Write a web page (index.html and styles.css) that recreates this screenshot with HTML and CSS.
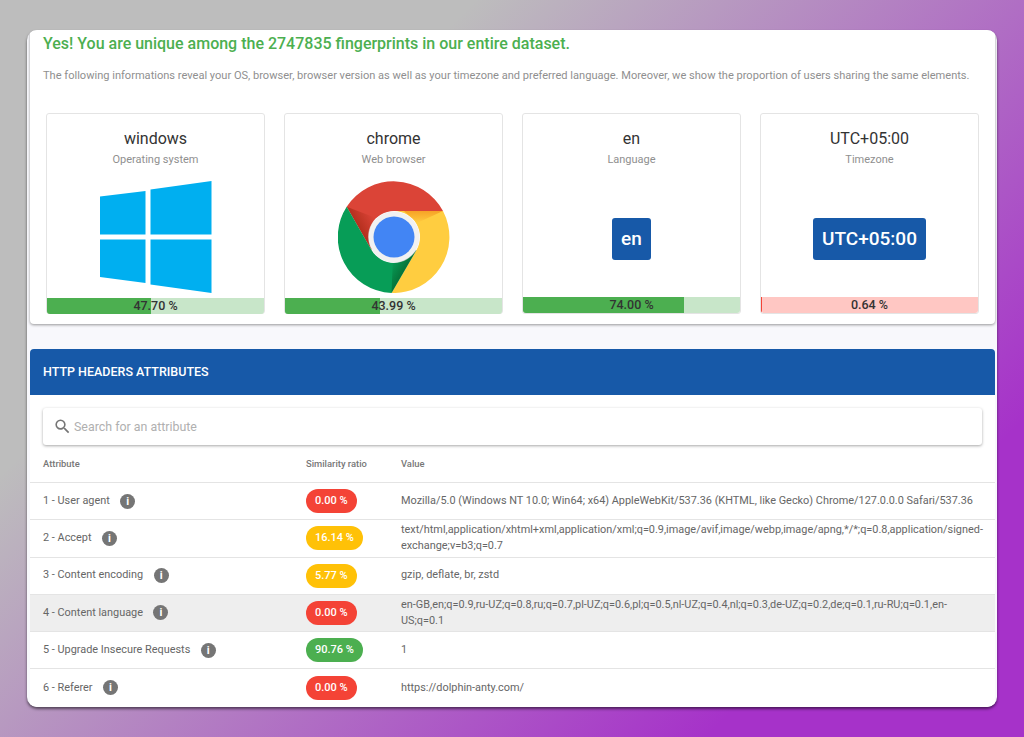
FILE: index.html
```html
<!DOCTYPE html>
<html lang="en">
<head>
   <meta charset="UTF-8">
   <meta name="viewport" content="width=device-width, initial-scale=1.0">
   <title>Fingerprint result</title>
   <link rel="stylesheet" href="styles.css">
</head>
<body>

<div class="window">
   <!-- Summary -->
   <section class="summary">
       <h1>Yes! You are unique among the 2747835 fingerprints in our entire dataset.</h1>
       <p class="intro">The following informations reveal your OS, browser, browser version as well as your timezone and preferred language. Moreover, we show the proportion of users sharing the same elements.</p>
       <div class="cards">
           <div class="card">
               <h2>windows</h2>
               <p class="card-sub">Operating system</p>
               <div class="card-pic">
                   <svg width="112" height="112" viewBox="0 0 112 112">
                       <polygon fill="#00aff0" points="0,15.5 45.5,10 45.5,53.5 0,53.5"/>
                       <polygon fill="#00aff0" points="50.5,8.5 111.5,0 111.5,53.5 50.5,53.5"/>
                       <polygon fill="#00aff0" points="0,58.5 45.5,58.5 45.5,102 0,96"/>
                       <polygon fill="#00aff0" points="50.5,58.5 111.5,58.5 111.5,112 50.5,103.5"/>
                   </svg>
               </div>
               <div class="bar bar-green bar-low">
                   <div class="bar-fill" style="width: 47.7%"></div>
                   <span>47.70 %</span>
               </div>
           </div>
           <div class="card">
               <h2>chrome</h2>
               <p class="card-sub">Web browser</p>
               <div class="card-pic">
                   <svg width="112" height="112" viewBox="0 0 112 112">
                       <defs>
                           <linearGradient id="shadeRed" gradientUnits="userSpaceOnUse" x1="24" y1="52" x2="40" y2="43">
                               <stop offset="0" stop-color="#a52714" stop-opacity="0.7"/>
                               <stop offset="1" stop-color="#a52714" stop-opacity="0"/>
                           </linearGradient>
                           <linearGradient id="shadeGreen" gradientUnits="userSpaceOnUse" x1="68" y1="88" x2="54" y2="80">
                               <stop offset="0" stop-color="#055524" stop-opacity="0.6"/>
                               <stop offset="1" stop-color="#055524" stop-opacity="0"/>
                           </linearGradient>
                           <linearGradient id="shadeYellow" gradientUnits="userSpaceOnUse" x1="80" y1="30" x2="80" y2="42">
                               <stop offset="0" stop-color="#ea6100" stop-opacity="0.4"/>
                               <stop offset="1" stop-color="#ea6100" stop-opacity="0"/>
                           </linearGradient>
                       </defs>
                       <path fill="#db4437" d="M8.7 25.7L33.5 69A26 26 0 0 1 56 30L105 30A56 56 0 0 0 8.7 25.7Z"/>
                       <path fill="url(#shadeRed)" d="M8.7 25.7L33.5 69L46 40Z"/>
                       <path fill="#ffcd40" d="M56 30L105 30A56 56 0 0 1 53.5 112L78.5 69A26 26 0 0 0 56 30Z"/>
                       <path fill="url(#shadeYellow)" d="M66 30L105 30L79 42Z"/>
                       <path fill="#079d57" d="M8.7 25.7A56 56 0 0 0 53.5 112L78.5 69A26 26 0 0 1 33.5 69Z"/>
                       <path fill="url(#shadeGreen)" d="M53.5 112L78.5 69L55 75Z"/>
                       <circle cx="56" cy="56" r="25.5" fill="#f1f1f1"/>
                       <circle cx="56" cy="56" r="20.5" fill="#4285f4"/>
                   </svg>
               </div>
               <div class="bar bar-green bar-low">
                   <div class="bar-fill" style="width: 43.99%"></div>
                   <span>43.99 %</span>
               </div>
           </div>
           <div class="card">
               <h2>en</h2>
               <p class="card-sub">Language</p>
               <div class="card-pic card-pic-text">
                   <span class="tag">en</span>
               </div>
               <div class="bar bar-green">
                   <div class="bar-fill" style="width: 74%"></div>
                   <span>74.00 %</span>
               </div>
           </div>
           <div class="card">
               <h2>UTC+05:00</h2>
               <p class="card-sub">Timezone</p>
               <div class="card-pic card-pic-text">
                   <span class="tag">UTC+05:00</span>
               </div>
               <div class="bar bar-red">
                   <div class="bar-fill" style="width: 0.64%"></div>
                   <span>0.64 %</span>
               </div>
           </div>
       </div>
   </section>

   <!-- Attributes table -->
   <section class="attributes">
       <div class="attributes-title">HTTP HEADERS ATTRIBUTES</div>
       <div class="search">
           <svg width="19" height="19" viewBox="0 0 24 24"><path fill="#757575" d="M15.5 14h-.79l-.28-.27A6.47 6.47 0 0 0 16 9.5 6.5 6.5 0 1 0 9.5 16c1.61 0 3.09-.59 4.23-1.57l.27.28v.79l5 4.99L20.49 19l-4.99-5zm-6 0C7.01 14 5 11.99 5 9.5S7.01 5 9.5 5 14 7.01 14 9.5 11.99 14 9.5 14z"/></svg>
           <span>Search for an attribute</span>
       </div>
       <table>
           <thead>
               <tr>
                   <th class="col-name">Attribute</th>
                   <th class="col-ratio">Similarity ratio</th>
                   <th>Value</th>
               </tr>
           </thead>
           <tbody>
               <tr>
                   <td><span class="attr-name">1 - User agent</span><span class="info">i</span></td>
                   <td><span class="pill pill-red">0.00 %</span></td>
                   <td>Mozilla/5.0 (Windows NT 10.0; Win64; x64) AppleWebKit/537.36 (KHTML, like Gecko) Chrome/127.0.0.0 Safari/537.36</td>
               </tr>
               <tr>
                   <td><span class="attr-name">2 - Accept</span><span class="info">i</span></td>
                   <td><span class="pill pill-yellow">16.14 %</span></td>
                   <td>text/html,application/xhtml+xml,application/xml;q=0.9,image/avif,image/webp,image/apng,*/*;q=0.8,application/signed-exchange;v=b3;q=0.7</td>
               </tr>
               <tr>
                   <td><span class="attr-name">3 - Content encoding</span><span class="info">i</span></td>
                   <td><span class="pill pill-yellow">5.77 %</span></td>
                   <td>gzip, deflate, br, zstd</td>
               </tr>
               <tr class="row-hover">
                   <td><span class="attr-name">4 - Content language</span><span class="info">i</span></td>
                   <td><span class="pill pill-red">0.00 %</span></td>
                   <td>en-GB,en;q=0.9,ru-UZ;q=0.8,ru;q=0.7,pl-UZ;q=0.6,pl;q=0.5,nl-UZ;q=0.4,nl;q=0.3,de-UZ;q=0.2,de;q=0.1,ru-RU;q=0.1,en-US;q=0.1</td>
               </tr>
               <tr>
                   <td><span class="attr-name">5 - Upgrade Insecure Requests</span><span class="info">i</span></td>
                   <td><span class="pill pill-green">90.76 %</span></td>
                   <td>1</td>
               </tr>
               <tr>
                   <td><span class="attr-name">6 - Referer</span><span class="info">i</span></td>
                   <td><span class="pill pill-red">0.00 %</span></td>
                   <td>https://dolphin-anty.com/</td>
               </tr>
           </tbody>
       </table>
   </section>
</div>

</body>
</html>
```

FILE: styles.css
```css
html, body {
    height: 100%;
}
body {
    margin: 0;
    padding: 30px 27px;
    box-sizing: border-box;
    overflow: hidden;
    font-family: Roboto, Arial, sans-serif;
    color: #666;
    background: linear-gradient(135deg, #bdbdbd 27%, #a632c9 82%);
}
.window {
    height: 677px;
    padding: 0 2px 0 3px;
    box-sizing: border-box;
    background-color: #f8f8fc;
    border-radius: 10px;
    overflow: hidden;
    box-shadow: 0 2px 3px rgba(0, 0, 0, 0.55);
}
.summary {
    height: 294px;
    padding: 0 13px;
    box-sizing: border-box;
    background-color: white;
    border-radius: 0 0 4px 4px;
    box-shadow: 0 1px 3px rgba(0, 0, 0, 0.4);
}
h1 {
    margin: 0;
    padding-top: 4px;
    font-size: 16px;
    line-height: 19px;
    font-weight: 500;
    color: #4caf50;
}
.intro {
    margin: 14px 0 0;
    font-size: 11.07px;
    line-height: 18px;
    white-space: nowrap;
    color: #8f8f8f;
}
.cards {
    display: grid;
    grid-template-columns: repeat(4, 219px);
    gap: 19px;
    margin: 28px 0 0 3px;
}
.card {
    height: 201px;
    box-sizing: border-box;
    border: 1px solid #e4e4e4;
    border-radius: 3px;
    display: flex;
    flex-direction: column;
    align-items: center;
}
.card h2 {
    margin: 15px 0 0;
    font-size: 16px;
    line-height: 20px;
    font-weight: 400;
    color: #333;
}
.card-sub {
    margin: 3px 0 0;
    font-size: 11px;
    line-height: 15px;
    color: #8f8f8f;
}
.card-pic {
    height: 112px;
    margin-top: 14px;
    display: flex;
    align-items: center;
    justify-content: center;
}
.card-pic svg {
    display: block;
}
.card-pic-text {
    margin-top: 16px;
}
.tag {
    padding: 0 9.5px;
    line-height: 42px;
    font-size: 19px;
    font-weight: 500;
    color: white;
    background-color: #1759a8;
    border-radius: 3px;
}
.bar {
    position: relative;
    margin-top: auto;
    align-self: stretch;
    height: 16px;
    border-radius: 0 0 3px 3px;
    overflow: hidden;
    text-align: center;
    font-size: 12.5px;
    font-weight: 500;
    line-height: 16px;
    color: #333;
}
.bar-low {
    margin-bottom: -1px;
}
.bar span {
    position: relative;
}
.bar-fill {
    position: absolute;
    left: 0;
    top: 0;
    bottom: 0;
}
.bar-green {
    background-color: #c8e6c9;
}
.bar-green .bar-fill {
    background-color: #4caf50;
}
.bar-red {
    background-color: #ffc7c3;
}
.bar-red .bar-fill {
    background-color: #f44336;
}
.attributes {
    height: 358px;
    margin-top: 25px;
    background-color: white;
}
.attributes-title {
    height: 46px;
    padding-left: 13px;
    box-sizing: border-box;
    font-size: 12.5px;
    font-weight: 500;
    line-height: 45px;
    color: white;
    background-color: #1759a8;
    border-radius: 4px 4px 0 0;
}
.search {
    height: 37px;
    margin: 13px 13px 0;
    padding-left: 10px;
    display: flex;
    align-items: center;
    gap: 2px;
    background-color: white;
    border-radius: 3px;
    box-shadow: 0 1px 3px rgba(0, 0, 0, 0.35);
    font-size: 12.4px;
    color: #b0b0b0;
}
table {
    width: 100%;
    border-collapse: collapse;
    table-layout: fixed;
    font-size: 10.9px;
}
th {
    height: 37px;
    padding: 0 13px;
    text-align: left;
    font-size: 9.4px;
    font-weight: 500;
    color: #777;
}
.col-name {
    width: 237px;
}
.col-ratio {
    width: 69px;
    white-space: nowrap;
}
td {
    height: 37.3px;
    padding: 0 13px;
    box-sizing: border-box;
    border-top: 1px solid #e4e4e4;
    line-height: 16.5px;
    color: #666;
}
.row-hover {
    background-color: #eeeeee;
}
.attr-name {
    margin-right: 10.5px;
}
.info {
    display: inline-block;
    width: 15px;
    height: 15px;
    vertical-align: middle;
    border-radius: 50%;
    background-color: #757575;
    color: white;
    font-size: 11px;
    font-weight: 700;
    line-height: 15px;
    text-align: center;
}
.pill {
    display: inline-block;
    height: 24px;
    padding: 0 9px;
    border-radius: 12px;
    font-size: 11px;
    font-weight: 500;
    line-height: 24px;
    color: white;
    white-space: nowrap;
}
.pill-red {
    background-color: #f44336;
}
.pill-yellow {
    background-color: #ffc107;
}
.pill-green {
    background-color: #4caf50;
}
```
